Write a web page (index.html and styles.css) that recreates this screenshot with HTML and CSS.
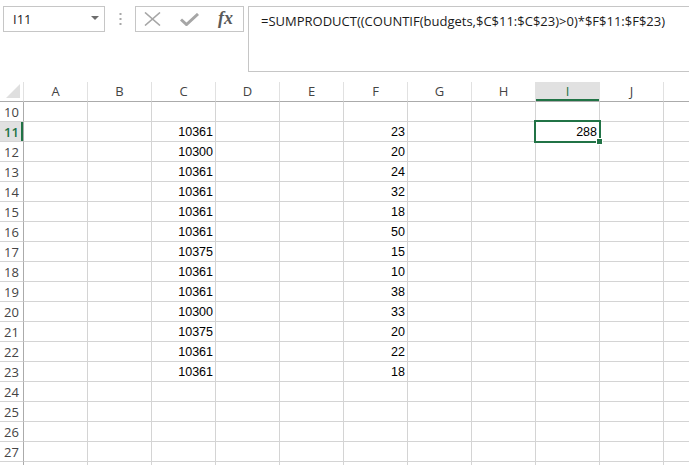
FILE: index.html
```html
<!DOCTYPE html>
<html>
<head>
<meta charset="utf-8">
<link rel="stylesheet" href="styles.css">
</head>
<body>
<div class="topbar">
  <div class="namebox"><span class="name">I11</span><svg class="caret" width="8" height="5" viewBox="0 0 8 5"><polygon points="0,0 8,0 4,4" fill="#6d6d6d"/></svg></div>
  <div class="dots"><svg width="3" height="13" viewBox="0 0 3 13"><rect x="0.5" y="0" width="2" height="2" fill="#a8a8a8"/><rect x="0.5" y="5" width="2" height="2" fill="#a8a8a8"/><rect x="0.5" y="10" width="2" height="2" fill="#a8a8a8"/></svg></div>
  <div class="fnbox">
    <svg class="ico-x" width="17" height="14" viewBox="0 0 17 14"><path d="M1 0.5 L16 13.5 M16 0.5 L1 13.5" stroke="#a6a6a6" stroke-width="1.6" fill="none"/></svg>
    <svg class="ico-ok" width="19" height="13" viewBox="0 0 19 13"><path d="M1 6.5 L6.5 11.5 L18 1" stroke="#a6a6a6" stroke-width="3" fill="none"/></svg>
    <span class="fx">fx</span>
  </div>
  <div class="formula">=SUMPRODUCT((COUNTIF(budgets,$C$11:$C$23)&gt;0)*$F$11:$F$23)</div>
</div>
<div class="sheet">
  <div class="row hdr"><div class="rh corner"><svg width="14" height="14" viewBox="0 0 14 14"><polygon points="14,0 14,14 0,14" fill="#dfdfdf"/></svg></div><div class="c">A</div><div class="c">B</div><div class="c">C</div><div class="c">D</div><div class="c">E</div><div class="c">F</div><div class="c">G</div><div class="c">H</div><div class="c selcol">I</div><div class="c">J</div><div class="c"></div></div>
  <div class="row"><div class="rh">10</div><div class="c"></div><div class="c"></div><div class="c"></div><div class="c"></div><div class="c"></div><div class="c"></div><div class="c"></div><div class="c"></div><div class="c"></div><div class="c"></div><div class="c"></div></div>
  <div class="row"><div class="rh selrow">11</div><div class="c"></div><div class="c"></div><div class="c">10361</div><div class="c"></div><div class="c"></div><div class="c">23</div><div class="c"></div><div class="c"></div><div class="c sel">288<span class="handle"></span></div><div class="c"></div><div class="c"></div></div>
  <div class="row"><div class="rh">12</div><div class="c"></div><div class="c"></div><div class="c">10300</div><div class="c"></div><div class="c"></div><div class="c">20</div><div class="c"></div><div class="c"></div><div class="c"></div><div class="c"></div><div class="c"></div></div>
  <div class="row"><div class="rh">13</div><div class="c"></div><div class="c"></div><div class="c">10361</div><div class="c"></div><div class="c"></div><div class="c">24</div><div class="c"></div><div class="c"></div><div class="c"></div><div class="c"></div><div class="c"></div></div>
  <div class="row"><div class="rh">14</div><div class="c"></div><div class="c"></div><div class="c">10361</div><div class="c"></div><div class="c"></div><div class="c">32</div><div class="c"></div><div class="c"></div><div class="c"></div><div class="c"></div><div class="c"></div></div>
  <div class="row"><div class="rh">15</div><div class="c"></div><div class="c"></div><div class="c">10361</div><div class="c"></div><div class="c"></div><div class="c">18</div><div class="c"></div><div class="c"></div><div class="c"></div><div class="c"></div><div class="c"></div></div>
  <div class="row"><div class="rh">16</div><div class="c"></div><div class="c"></div><div class="c">10361</div><div class="c"></div><div class="c"></div><div class="c">50</div><div class="c"></div><div class="c"></div><div class="c"></div><div class="c"></div><div class="c"></div></div>
  <div class="row"><div class="rh">17</div><div class="c"></div><div class="c"></div><div class="c">10375</div><div class="c"></div><div class="c"></div><div class="c">15</div><div class="c"></div><div class="c"></div><div class="c"></div><div class="c"></div><div class="c"></div></div>
  <div class="row"><div class="rh">18</div><div class="c"></div><div class="c"></div><div class="c">10361</div><div class="c"></div><div class="c"></div><div class="c">10</div><div class="c"></div><div class="c"></div><div class="c"></div><div class="c"></div><div class="c"></div></div>
  <div class="row"><div class="rh">19</div><div class="c"></div><div class="c"></div><div class="c">10361</div><div class="c"></div><div class="c"></div><div class="c">38</div><div class="c"></div><div class="c"></div><div class="c"></div><div class="c"></div><div class="c"></div></div>
  <div class="row"><div class="rh">20</div><div class="c"></div><div class="c"></div><div class="c">10300</div><div class="c"></div><div class="c"></div><div class="c">33</div><div class="c"></div><div class="c"></div><div class="c"></div><div class="c"></div><div class="c"></div></div>
  <div class="row"><div class="rh">21</div><div class="c"></div><div class="c"></div><div class="c">10375</div><div class="c"></div><div class="c"></div><div class="c">20</div><div class="c"></div><div class="c"></div><div class="c"></div><div class="c"></div><div class="c"></div></div>
  <div class="row"><div class="rh">22</div><div class="c"></div><div class="c"></div><div class="c">10361</div><div class="c"></div><div class="c"></div><div class="c">22</div><div class="c"></div><div class="c"></div><div class="c"></div><div class="c"></div><div class="c"></div></div>
  <div class="row"><div class="rh">23</div><div class="c"></div><div class="c"></div><div class="c">10361</div><div class="c"></div><div class="c"></div><div class="c">18</div><div class="c"></div><div class="c"></div><div class="c"></div><div class="c"></div><div class="c"></div></div>
  <div class="row"><div class="rh">24</div><div class="c"></div><div class="c"></div><div class="c"></div><div class="c"></div><div class="c"></div><div class="c"></div><div class="c"></div><div class="c"></div><div class="c"></div><div class="c"></div><div class="c"></div></div>
  <div class="row"><div class="rh">25</div><div class="c"></div><div class="c"></div><div class="c"></div><div class="c"></div><div class="c"></div><div class="c"></div><div class="c"></div><div class="c"></div><div class="c"></div><div class="c"></div><div class="c"></div></div>
  <div class="row"><div class="rh">26</div><div class="c"></div><div class="c"></div><div class="c"></div><div class="c"></div><div class="c"></div><div class="c"></div><div class="c"></div><div class="c"></div><div class="c"></div><div class="c"></div><div class="c"></div></div>
  <div class="row"><div class="rh">27</div><div class="c"></div><div class="c"></div><div class="c"></div><div class="c"></div><div class="c"></div><div class="c"></div><div class="c"></div><div class="c"></div><div class="c"></div><div class="c"></div><div class="c"></div></div>
  <div class="row"><div class="rh"></div><div class="c"></div><div class="c"></div><div class="c"></div><div class="c"></div><div class="c"></div><div class="c"></div><div class="c"></div><div class="c"></div><div class="c"></div><div class="c"></div><div class="c"></div></div>
</div>
</body>
</html>
```
FILE: styles.css
```css
html, body {
  margin: 0;
  padding: 0;
  background: #ffffff;
}
body {
  width: 689px;
  height: 465px;
  overflow: hidden;
  font-family: "Open Sans", "Noto Sans", sans-serif;
  color: #000;
}
.topbar {
  display: flex;
  align-items: flex-start;
  height: 82px;
  padding-top: 6px;
  box-sizing: border-box;
}
.namebox {
  margin-left: 3px;
  width: 102px;
  height: 26px;
  box-sizing: border-box;
  border: 1px solid #c6c6c6;
  display: flex;
  align-items: center;
  justify-content: space-between;
  padding: 0 5px 0 9px;
  flex: none;
}
.name {
  font-size: 13px;
  color: #222;
}
.caret {
  display: block;
  margin-top: -1px;
}
.dots {
  width: 30px;
  height: 26px;
  display: flex;
  align-items: center;
  justify-content: center;
  flex: none;
}
.dots svg { display: block; }
.fnbox {
  width: 109px;
  height: 26px;
  box-sizing: border-box;
  border: 1px solid #c6c6c6;
  display: flex;
  align-items: center;
  padding-left: 8px;
  flex: none;
}
.ico-x { display: block; margin-right: 19px; }
.ico-ok { display: block; margin-right: 19px; margin-top: 1px; }
.fx {
  font-family: "Liberation Serif", "DejaVu Serif", serif;
  font-style: italic;
  font-weight: bold;
  font-size: 18px;
  color: #5a5a5a;
  line-height: 20px;
  margin-top: -2px;
}
.formula {
  margin-left: 4px;
  flex: none;
  width: 460px;
  height: 66px;
  box-sizing: border-box;
  border: 1px solid #c6c6c6;
  border-right: none;
  padding: 5px 0 0 12px;
  font-size: 13px;
  line-height: 18px;
  color: #1a1a1a;
  white-space: nowrap;
}
.sheet {
  display: flex;
  flex-direction: column;
}
.row {
  display: flex;
  height: 20px;
  flex: none;
}
.rh {
  width: 24px;
  flex: none;
  box-sizing: border-box;
  border-right: 1px solid #ababab;
  border-bottom: 1px solid #d4d4d4;
  text-align: center;
  font-family: "Open Sans", sans-serif;
  font-size: 13px;
  line-height: 20px;
  color: #444;
}
.c {
  width: 64px;
  flex: none;
  box-sizing: border-box;
  border-right: 1px solid #d4d4d4;
  border-bottom: 1px solid #d4d4d4;
  text-align: right;
  padding-right: 2px;
  font-family: "Liberation Sans", Arial, sans-serif;
  font-size: 12.5px;
  line-height: 21px;
}
.hdr .c {
  text-align: center;
  padding-right: 0;
  border-right-color: #e1e1e1;
  border-bottom-color: #ababab;
  font-family: "Open Sans", sans-serif;
  font-size: 13px;
  line-height: 19px;
  color: #444;
}
.hdr .rh {
  border-bottom-color: #ababab;
  border-right-color: #e1e1e1;
  display: flex;
  align-items: flex-end;
  justify-content: flex-end;
  padding: 0 3px 3px 0;
}
.hdr .rh svg { display: block; }
.hdr .c.selcol {
  background: #e1e1e1;
  color: #217346;
  box-shadow: inset 0 -2px 0 #217346;
}
.rh.selrow {
  background: #e1e1e1;
  color: #217346;
  font-weight: 600;
  box-shadow: inset -2px 0 0 #217346;
}
.c.sel {
  position: relative;
}
.c.sel::after {
  content: "";
  position: absolute;
  left: -2px;
  top: -2px;
  width: 67px;
  height: 23px;
  box-sizing: border-box;
  border: 2px solid #217346;
}
.handle {
  position: absolute;
  right: -4px;
  bottom: -4px;
  width: 5px;
  height: 5px;
  background: #217346;
  border: 1px solid #fff;
  z-index: 2;
}
```
